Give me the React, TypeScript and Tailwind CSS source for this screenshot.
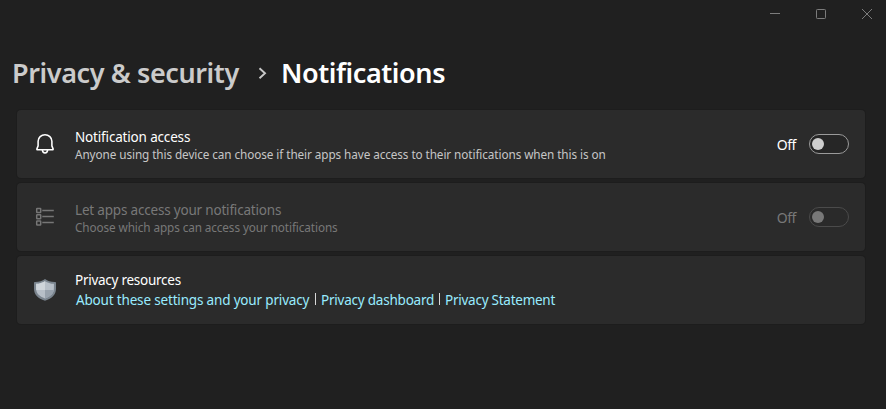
import type { ReactNode } from 'react';

function Toggle({ disabled = false }: { disabled?: boolean }) {
  return (
    <div className={`flex h-5 w-10 items-center rounded-full border pl-[2px] ${disabled ? 'border-[#4b4b4b] bg-[#2a2a2a]' : 'border-[#9a9a9a] bg-[#262626]'}`}>
      <div className={`size-3 rounded-full ${disabled ? 'bg-[#787878]' : 'bg-[#cecece]'}`} />
    </div>
  );
}

function Card({ icon, children, action, top }: { icon: ReactNode; children: ReactNode; action?: ReactNode; top: string }) {
  return (
    <section className="flex h-[68px] rounded-[4px] bg-[#2b2b2b] px-4 shadow-[0_0_0_1px_#1d1d1d]">
      <div className="flex w-[42px] shrink-0 items-center">{icon}</div>
      <div className={`flex-1 ${top}`}>{children}</div>
      {action}
    </section>
  );
}

function BellIcon() {
  return (
    <svg width="24" height="24" viewBox="0 0 24 24" fill="none" stroke="#fff" strokeWidth="1.55" strokeLinejoin="round">
      <path d="M5.1 9.3C5.1 5.600 8.200 2.700 12 2.700s6.900 2.900 6.900 6.600v4.600l1.200 3c.2.5-.1.9-.6.9h-15c-.5 0-.8-.4-.6-.9l1.200-3z" />
      <path d="M9.400 18c.1 2 1.100 2.900 2.600 2.900s2.500-.9 2.600-2.900" />
    </svg>
  );
}

function ListIcon() {
  return (
    <svg width="24" height="24" viewBox="0 0 24 24" fill="none" stroke="#767676" strokeWidth="1.5">
      <rect x="3.700" y="3.600" width="4" height="4" rx=".5" />
      <rect x="3.700" y="9.700" width="4" height="4" rx=".5" />
      <rect x="3.700" y="15.900" width="4" height="4" rx=".5" />
      <path d="M9.300 5.400h11.500M9.300 11.600h11.500M9.300 17.600h11.500" />
    </svg>
  );
}

function ShieldIcon() {
  return (
    <svg width="24" height="24" viewBox="0 0 24 24">
      <path d="M12 1c2.400 1.900 5.800 3 10 3.100.6 0 1 .4 1 1v5.700c0 5.600-3.800 9.700-11 12C4.800 20.500 1 16.400 1 10.800V5.100c0-.6.400-1 1-1C6.200 4 9.600 2.900 12 1z" fill="#7a848e" />
      <path d="M12 3.200c2.600 1.600 5.500 2.500 8.900 2.600v5c0 4.400-3.100 7.600-8.900 9.700-5.800-2.100-8.900-5.300-8.900-9.700v-5C6.500 5.700 9.400 4.800 12 3.200z" fill="#b7bfc8" />
      <path d="M12 3.200V12H3.200l-.1-1.200v-5C6.500 5.700 9.400 4.800 12 3.200z" fill="#cfd5db" />
      <path d="M12 12h8.800c-.6 3.800-3.700 6.600-8.800 8.500z" fill="#98a2ad" />
    </svg>
  );
}

export default function App() {
  return (
    <div className="h-[409px] w-full overflow-hidden bg-[#202020] font-['Noto_Sans','Open_Sans',sans-serif] text-white">
      <header className="flex h-7 items-start justify-end gap-[35px] pt-[9px] pr-[13px]">
        <svg width="11" height="11" viewBox="0 0 11 11" stroke="#7c7c7c"><path d="M0 4.500h10" /></svg>
        <svg width="11" height="11" viewBox="0 0 11 11" fill="none" stroke="#7c7c7c"><rect x=".5" y=".5" width="9" height="9" rx=".8" /></svg>
        <svg width="11" height="11" viewBox="0 0 11 11" stroke="#7c7c7c"><path d="M0 0l10 10M10 0L0 10" /></svg>
      </header>
      <h1 className="flex h-[82px] pt-[26px] pl-[12px] text-[27px] leading-[38px] font-semibold whitespace-nowrap">
        <span className="w-[246px] tracking-[-0.4px] text-[#cbcbcb]">Privacy &amp; security</span>
        <svg className="mt-[13px] w-[23px]" height="14" viewBox="0 0 23 14" fill="none" stroke="#c8c8c8" strokeWidth="1.9"><path d="M1.500 1.200 7 6.200 1.500 11.200" /></svg>
        <span className="tracking-[-0.42px]">Notifications</span>
      </h1>
      <main className="mr-[21px] ml-[17px] flex flex-col gap-[5px]">
        <Card
          icon={<BellIcon />}
          top="pt-[18px]"
          action={<div className="flex items-center gap-[13px] text-[14px] leading-5"><span className="pt-px tracking-[-0.4px]">Off</span><Toggle /></div>}
        >
          <div className="text-[13.5px] leading-[18px] tracking-[-0.17px]">Notification access</div>
          <div className="text-[11.75px] leading-[17px] tracking-[-0.085px] whitespace-nowrap text-[#c6c6c6]">Anyone using this device can choose if their apps have access to their notifications when this is on</div>
        </Card>
        <Card
          icon={<ListIcon />}
          top="pt-[18px]"
          action={<div className="flex items-center gap-[13px] text-[14px] leading-5 text-[#787878]"><span className="pt-px tracking-[-0.4px]">Off</span><Toggle disabled /></div>}
        >
          <div className="text-[13.5px] leading-[18px] tracking-[-0.19px] text-[#787878]">Let apps access your notifications</div>
          <div className="text-[11.75px] leading-[17px] tracking-[-0.1px] whitespace-nowrap text-[#787878]">Choose which apps can access your notifications</div>
        </Card>
        <Card icon={<ShieldIcon />} top="pt-[15px]">
          <div className="text-[13.5px] leading-[18px] tracking-[-0.26px]">Privacy resources</div>
          <div className="mt-px ml-px flex text-[13.5px] leading-5 whitespace-nowrap text-[#99ebff]">
            <a className="w-[239px] tracking-[-0.17px]">About these settings and your privacy</a>
            <span className="mt-[3px] h-3 w-px bg-[#d8d8d8]" />
            <a className="ml-[5px] w-[118px] tracking-[-0.22px]">Privacy dashboard</a>
            <span className="mt-[3px] h-3 w-px bg-[#d8d8d8]" />
            <a className="ml-[5px] tracking-[-0.25px]">Privacy Statement</a>
          </div>
        </Card>
      </main>
    </div>
  );
}
